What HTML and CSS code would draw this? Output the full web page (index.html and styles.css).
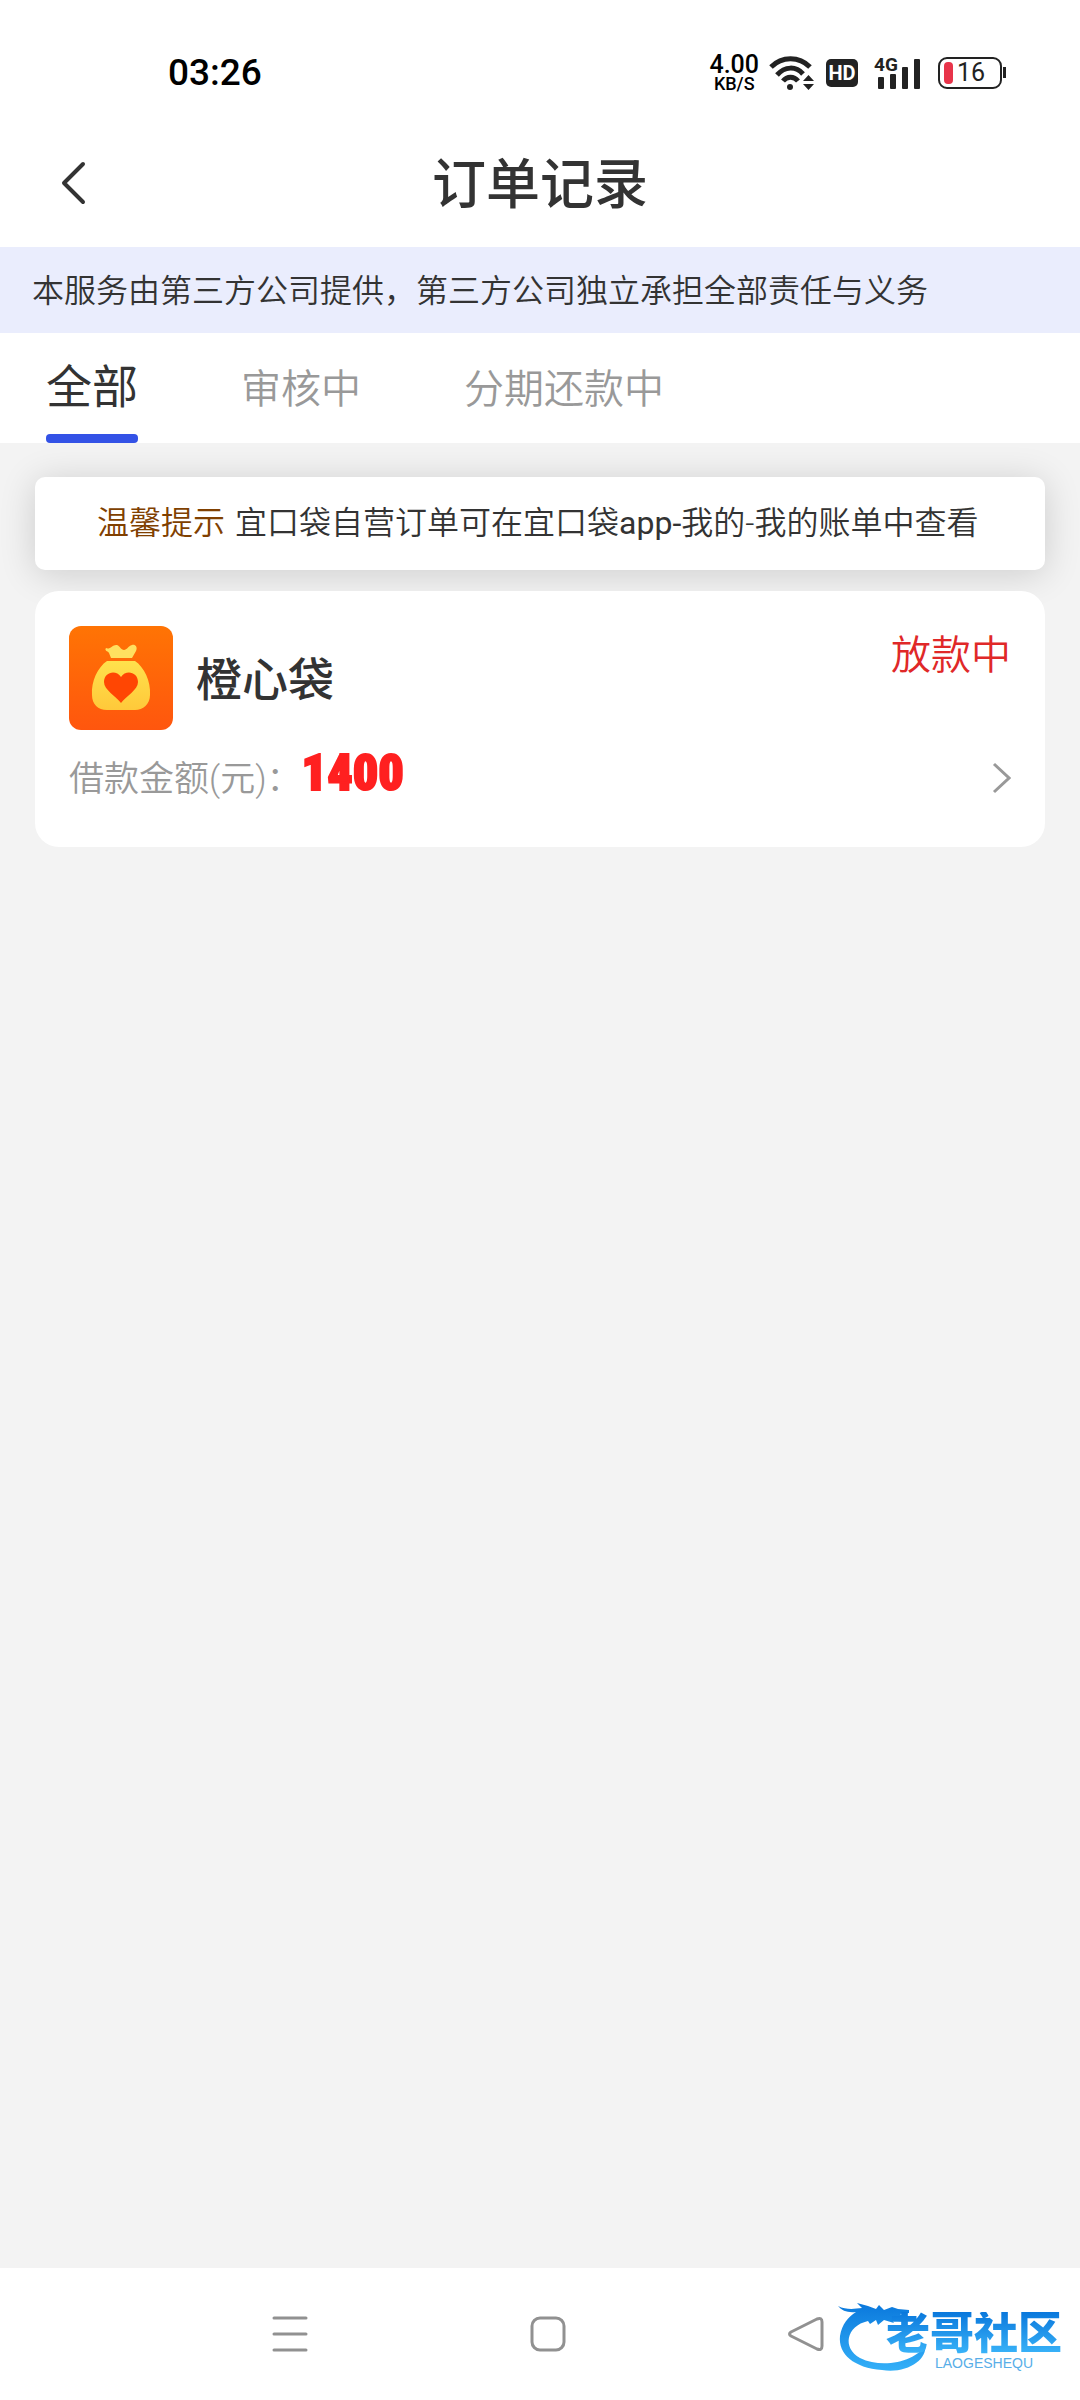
FILE: index.html
```html
<!DOCTYPE html>
<html lang="zh-CN">
<head>
    <meta charset="UTF-8">
    <meta name="viewport" content="width=device-width, initial-scale=1">
    <title>订单记录</title>
    <link rel="stylesheet" href="styles.css">
</head>
<body>
    <!-- Status bar -->
    <div class="status-bar">
        <span class="time">03:26</span>
        <div class="status-icons">
            <div class="speed">
                <span class="speed-value">4.00</span>
                <span class="speed-unit">KB/S</span>
            </div>
            <svg class="wifi" width="46" height="36" viewBox="0 0 46 36" fill="none" stroke="#222">
                <path d="M2 12C13 1 30 1 41 12" stroke-width="5"/>
                <path d="M8 20C16 11 27 11 34 19" stroke-width="5"/>
                <path d="M14 26C18 21 25 21 29 26" stroke-width="5"/>
                <circle cx="21" cy="32" r="3" fill="#222" stroke="none"/>
                <path d="M34 26L39.500 20L45 26ZM34 29L39.500 35L45 29Z" fill="#222" stroke="none"/>
            </svg>
            <span class="hd">HD</span>
            <div class="signal">
                <span class="signal-type">4G</span>
                <svg width="48" height="34" viewBox="0 0 48 34" fill="#222">
                    <rect x="4" y="21" width="6" height="12" rx="1"/>
                    <rect x="16" y="18" width="6" height="15" rx="1"/>
                    <rect x="28" y="11" width="6" height="22" rx="1"/>
                    <rect x="40" y="3" width="6" height="30" rx="1"/>
                </svg>
            </div>
            <div class="battery"><span class="battery-level"></span>16</div>
        </div>
    </div>

    <header class="header">
        <button class="back" type="button" aria-label="返回">
            <svg width="26" height="44" viewBox="0 0 26 44" fill="none" stroke="#333" stroke-width="4" stroke-linecap="round" stroke-linejoin="round">
                <path d="M23 3L4 22L23 41"/>
            </svg>
        </button>
        <h1>订单记录</h1>
    </header>

    <p class="notice">本服务由第三方公司提供，第三方公司独立承担全部责任与义务</p>

    <nav class="tabs">
        <a href="#all" class="active">全部</a>
        <a href="#review">审核中</a>
        <a href="#repay">分期还款中</a>
    </nav>

    <main class="content">
        <p class="tip"><span class="tip-label">温馨提示</span>宜口袋自营订单可在宜口袋<span class="latin">app-</span>我的-我的账单中查看</p>

        <a href="#order" class="order">
            <div class="order-top">
                <svg class="logo" width="104" height="104" viewBox="0 0 104 104">
                    <defs>
                        <linearGradient id="tile" x1="0" y1="0" x2="0" y2="1">
                            <stop offset="0" stop-color="#ff7404"/>
                            <stop offset="1" stop-color="#ff560e"/>
                        </linearGradient>
                        <linearGradient id="bag" x1="0" y1="0" x2="0" y2="1">
                            <stop offset="0" stop-color="#ffe14c"/>
                            <stop offset="1" stop-color="#ffc93a"/>
                        </linearGradient>
                    </defs>
                    <rect width="104" height="104" rx="12" fill="url(#tile)"/>
                    <path d="M37 22C41 24 44 18 48 19C51 20 52 24 55 24C58 24 59 20 63 19C66 18 69 21 67 25L63 32H42L40 27C39 25 35 25 37 22Z" fill="#ffe060"/>
                    <path d="M38 35H66C75 41 82 55 81 69C81 78 74 84 66 84H38C29 84 23 78 23 69C22 55 29 41 38 35Z" fill="url(#bag)"/>
                    <path d="M52 77C47 70 35 64 35 56C35 46 47 43 52 51C57 43 69 46 69 56C69 64 57 70 52 77Z" fill="#ff4603"/>
                </svg>
                <h2>橙心袋</h2>
                <span class="state">放款中</span>
            </div>
            <div class="order-bottom">
                <span class="label">借款金额(元)：</span>
                <strong class="amount">1400</strong>
                <svg class="arrow" width="20" height="32" viewBox="0 0 20 32" fill="none" stroke="#999" stroke-width="3">
                    <path d="M3 2L18 16L3 30"/>
                </svg>
            </div>
        </a>
    </main>

    <!-- System navigation -->
    <footer class="system-nav">
        <button type="button" aria-label="最近任务">
            <svg width="36" height="36" viewBox="0 0 36 36" stroke="#919191" stroke-width="3" stroke-linecap="round">
                <path d="M2 2H34M2 18H34M2 34H34"/>
            </svg>
        </button>
        <button type="button" aria-label="主屏幕">
            <svg width="36" height="36" viewBox="0 0 36 36" fill="none" stroke="#919191" stroke-width="3">
                <rect x="2" y="2" width="32" height="32" rx="8"/>
            </svg>
        </button>
        <button type="button" aria-label="返回上一页">
            <svg width="36" height="36" viewBox="0 0 36 36" fill="none" stroke="#919191" stroke-width="3" stroke-linejoin="round">
                <path d="M3 16L29 3Q34 1 34 6V30Q34 35 29 33L3 20Q0 18 3 16Z"/>
            </svg>
        </button>
        <div class="watermark">
            <svg width="92" height="76" viewBox="0 0 92 76">
                <defs>
                    <linearGradient id="dragon" x1="0" y1="0" x2="0" y2="1">
                        <stop offset="0" stop-color="#0a78dc"/>
                        <stop offset="1" stop-color="#34b0f8"/>
                    </linearGradient>
                </defs>
                <path d="M0 6C8 10 16 9 24 8L19 3L30 6L38 9L41 5L46 10L54 7L60 9L71 10L71 13L62 14L70 18L60 18L66 22L54 20L56 23L46 20L40 25L38 20L32 24L30 21C8 26 4 48 22 58C46 70 80 60 87 45C90 60 68 74 44 70C16 68 0 54 2 36C4 24 10 17 18 12C10 13 4 11 0 6Z" fill="url(#dragon)"/>
            </svg>
            <div class="watermark-text">
                <span class="watermark-name">老哥社区</span>
                <span class="watermark-sub">LAOGESHEQU</span>
            </div>
        </div>
    </footer>
</body>
</html>
```
FILE: styles.css
```css
/* Reset and font */
* {
    margin: 0;
    padding: 0;
    box-sizing: border-box;
}

body {
    min-height: 100vh;
    display: flex;
    flex-direction: column;
    background-color: #fff;
    color: #333;
    font-family: Roboto, "Noto Sans CJK SC", sans-serif;
    font-size: 32px;
    font-weight: 350;
}

a {
    color: inherit;
    text-decoration: none;
}

button {
    background: none;
    border: none;
    cursor: pointer;
}

svg {
    display: block;
}

/* Status bar */
.status-bar {
    height: 119px;
    padding: 26px 78px 0 168px;
    display: flex;
    align-items: center;
    justify-content: space-between;
    color: #000;
}

.time {
    font-size: 37px;
    font-weight: 500;
}

.status-icons {
    display: flex;
    align-items: center;
    gap: 16px;
}

.speed {
    display: flex;
    flex-direction: column;
    align-items: center;
    font-weight: 500;
}

.speed-value {
    font-size: 25px;
    line-height: 22px;
}

.speed-unit {
    font-size: 18px;
    line-height: 16px;
}

.wifi {
    margin: 0 -5px 0 -6px;
}

.hd {
    width: 32px;
    height: 28px;
    border-radius: 5px;
    background-color: #222;
    color: #fff;
    font-size: 20px;
    font-weight: 700;
    line-height: 28px;
    text-align: center;
}

.signal {
    position: relative;
}

/* Network type sits over the first bars */
.signal-type {
    position: absolute;
    top: 0;
    left: 0;
    font-size: 19px;
    font-weight: 700;
    line-height: 17px;
    color: #222;
    background-color: #fff;
}

.battery {
    position: relative;
    width: 64px;
    height: 32px;
    padding-left: 4px;
    display: flex;
    align-items: center;
    gap: 4px;
    border: 2px solid #222;
    border-radius: 9px;
    color: #222;
    font-size: 25px;
    font-weight: 400;
}

.battery::after {
    content: "";
    position: absolute;
    right: -6px;
    width: 3px;
    height: 11px;
    background-color: #222;
}

.battery-level {
    width: 9px;
    height: 22px;
    border-radius: 4px;
    background-color: #e8344a;
}

/* Header */
.header {
    height: 128px;
    padding: 0 60px;
    display: grid;
    grid-template-columns: 1fr auto 1fr;
    align-items: center;
}

.back {
    justify-self: start;
}

h1 {
    padding-top: 6px;
    font-size: 54px;
    font-weight: 500;
    line-height: 64px;
}

.notice {
    padding: 2px 32px 0;
    background-color: #eaedfd;
    line-height: 84px;
}

/* Tabs */
.tabs {
    height: 110px;
    padding: 0 46px;
    display: flex;
    gap: 103px;
}

.tabs a {
    color: #999;
    font-size: 40px;
    line-height: 114px;
}

.tabs .active {
    padding-top: 7px;
    color: #333;
    font-size: 46px;
    font-weight: 400;
    line-height: 94px;
}

.tabs .active::after {
    content: "";
    display: block;
    height: 9px;
    border-radius: 4px;
    background-color: #3352e6;
}

/* Order list */
.content {
    flex: 1;
    padding: 34px 35px;
    display: flex;
    flex-direction: column;
    gap: 21px;
    background-color: #f3f3f3;
}

.tip {
    padding: 0 62px;
    border-radius: 10px;
    background-color: #fff;
    box-shadow: 0 4px 36px rgba(0, 0, 0, 0.16);
    line-height: 93px;
    white-space: nowrap;
}

.tip-label {
    margin-right: 10px;
    color: #804000;
}

.latin {
    font-weight: 400;
}

.order {
    height: 256px;
    padding: 35px 34px;
    border-radius: 24px;
    background-color: #fff;
    /* keeps the card above the tip's shadow */
    z-index: 1;
}

.order-top {
    display: flex;
    align-items: center;
    gap: 23px;
}

h2 {
    flex: 1;
    padding-top: 4px;
    font-size: 46px;
    font-weight: 500;
    line-height: 64px;
}

.state {
    align-self: flex-start;
    padding-top: 2px;
    color: #e02828;
    font-size: 40px;
    line-height: 56px;
}

.order-bottom {
    display: flex;
    align-items: center;
    height: 96px;
}

.label {
    padding-bottom: 6px;
    color: #999;
    font-size: 35px;
}

.amount {
    padding-bottom: 10px;
    color: #ff2020;
    font-family: "Roboto Condensed", Roboto, sans-serif;
    font-size: 50px;
    font-weight: 900;
    -webkit-text-stroke: 2px #ff2020;
}

.arrow {
    margin-left: auto;
}

/* System navigation */
.system-nav {
    position: relative;
    height: 132px;
    padding: 0 256px 0 272px;
    display: flex;
    align-items: center;
    justify-content: space-between;
}

/* Watermark floats over the right end of the bar */
.watermark {
    position: absolute;
    right: 18px;
    top: 32px;
    display: flex;
}

.watermark-text {
    margin: 12px 0 0 -44px;
    display: flex;
    flex-direction: column;
    align-items: center;
}

.watermark-name {
    background: linear-gradient(#0a78dc, #3cb6fa);
    background-clip: text;
    -webkit-background-clip: text;
    color: transparent;
    font-size: 44px;
    font-weight: 900;
    line-height: 44px;
}

.watermark-sub {
    padding-left: 20px;
    color: #58aee8;
    font-family: "Liberation Sans", sans-serif;
    font-size: 14px;
    line-height: 14px;
}
```
